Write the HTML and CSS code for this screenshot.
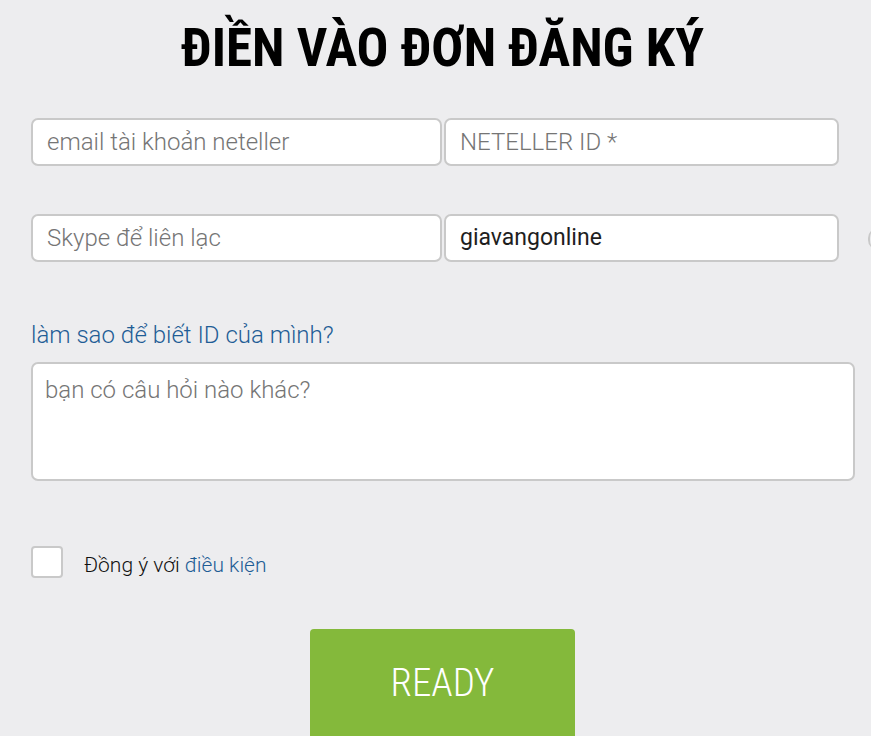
FILE: index.html
```html
<!DOCTYPE html>
<html>
<head>
<meta charset="utf-8">
<link rel="stylesheet" href="styles.css">
</head>
<body>
<div class="page">
  <h1 class="title">ĐIỀN VÀO ĐƠN ĐĂNG KÝ</h1>
  <div class="row">
    <div class="field field-left placeholder">email tài khoản neteller</div>
    <div class="field field-right placeholder">NETELLER ID *</div>
  </div>
  <div class="row row-2">
    <div class="field field-left placeholder">Skype để liên lạc</div>
    <div class="field field-right value">giavangonline</div>
  </div>
  <a class="help">làm sao để biết ID của mình?</a>
  <div class="area placeholder">bạn có câu hỏi nào khác?</div>
  <div class="agree">
    <span class="box"></span>
    <span class="agree-text">Đồng ý với <a class="terms">điều kiện</a></span>
  </div>
  <div class="btn-wrap"><div class="btn"><span class="btn-label">READY</span></div></div>
</div>
<span class="edge"></span>
</body>
</html>
```
FILE: styles.css
```css
html, body { margin: 0; padding: 0; }
body {
  background: #ededef;
  font-family: Roboto, "Noto Sans", sans-serif;
  width: 871px;
  height: 736px;
  overflow: hidden;
  position: relative;
}
.page {
  width: 823px;
  padding-left: 31px;
}
.title {
  margin: 0;
  padding-top: 17px;
  height: 118px;
  box-sizing: border-box;
  text-align: center;
  font-family: Roboto, sans-serif;
  font-weight: 700;
  font-stretch: condensed;
  font-size: 53px;
  line-height: 62px;
  color: #000;
  white-space: nowrap;
}
.row { display: flex; gap: 2px; }
.row-2 { margin-top: 48px; }
.field {
  box-sizing: border-box;
  height: 48px;
  background: #fff;
  border: 2px solid #c9c9c9;
  border-radius: 7px;
  padding: 0 14px;
  font-size: 24px;
  font-weight: 300;
  line-height: 44px;
}
.field-left { width: 411px; }
.field-right { width: 395px; }
.placeholder { color: #757575; }
.value { color: #1e1e1e; font-weight: 400; font-size: 23px; }
.help {
  display: block;
  margin-top: 59px;
  font-size: 24px;
  font-weight: 300;
  line-height: 28px;
  color: #1f5d96;
}
.area {
  margin-top: 13px;
  box-sizing: border-box;
  width: 824px;
  height: 119px;
  background: #fff;
  border: 2px solid #c9c9c9;
  border-radius: 7px;
  padding: 11px 12px;
  font-size: 24px;
  font-weight: 300;
  line-height: 30px;
}
.agree {
  margin-top: 65px;
  display: flex;
  align-items: center;
  gap: 21px;
}
.box {
  box-sizing: border-box;
  width: 32px;
  height: 32px;
  background: #fff;
  border: 2px solid #c9c9c9;
  border-radius: 4px;
}
.agree-text { font-size: 21px; font-weight: 300; color: #111; padding-top: 5px; }
.terms { color: #1f5d96; }
.btn-wrap { margin-top: 51px; padding-left: 279px; }
.btn {
  width: 265px;
  height: 120px;
  background: #84b93b;
  border-radius: 4px;
  color: #fff;
  text-align: center;
  padding-top: 30px;
  box-sizing: border-box;
}
.btn-label {
  display: inline-block;
  font-size: 39px;
  font-weight: 300;
  font-stretch: condensed;
  line-height: 48px;
}
.edge {
  position: absolute;
  left: 868px;
  top: 228px;
  width: 10px;
  height: 22px;
  border-left: 2px solid #c9c9c9;
  border-radius: 10px 0 0 10px;
}
```
